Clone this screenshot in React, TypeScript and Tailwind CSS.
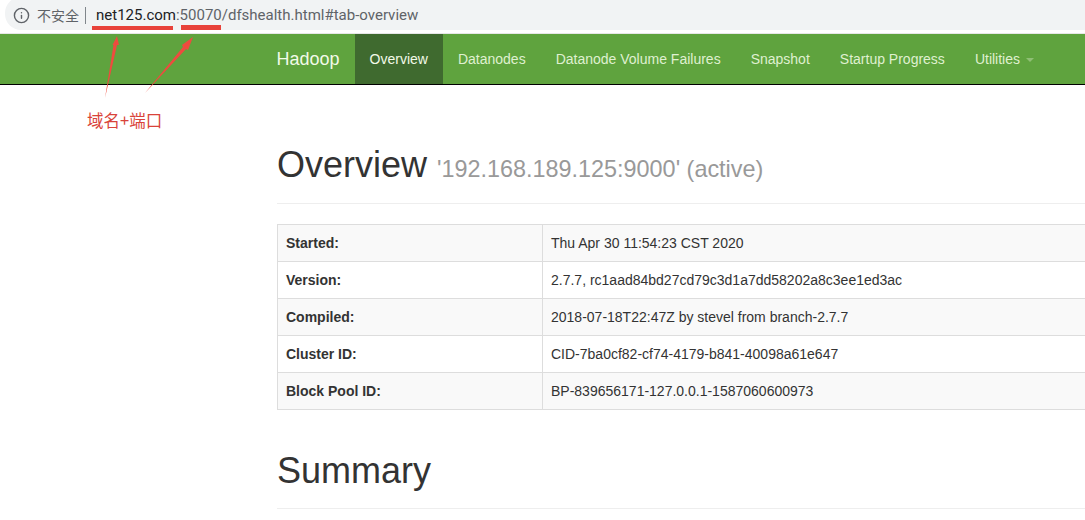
import { Info } from "lucide-react";

const rows = [
  ["Started:", "Thu Apr 30 11:54:23 CST 2020"],
  ["Version:", "2.7.7, rc1aad84bd27cd79c3d1a7dd58202a8c3ee1ed3ac"],
  ["Compiled:", "2018-07-18T22:47Z by stevel from branch-2.7.7"],
  ["Cluster ID:", "CID-7ba0cf82-cf74-4179-b841-40098a61e647"],
  ["Block Pool ID:", "BP-839656171-127.0.0.1-1587060600973"],
];

const links = ["Datanodes", "Datanode Volume Failures", "Snapshot", "Startup Progress"];

const AddressBar = () => (
  <div className="h-[33px] bg-white pl-[5px] overflow-hidden">
    <div className="h-[33px] -mt-[3px] pt-[3px] rounded-l-[16px] bg-[#f1f3f4] flex items-center pl-[8px] text-[#5f6368]">
      <Info size={17} strokeWidth={2} className="text-[#5f6368]" />
      <span className="ml-[7px] text-[14px] [font-family:'Noto_Sans_CJK_SC',sans-serif]">不安全</span>
      <span className="ml-[6px] h-[17px] w-px bg-[#80868b]" />
      <span className="ml-[10px] text-[15px] [font-family:Roboto,sans-serif]">
        <span className="text-[#202124]">net125.com</span>:50070/dfshealth.html#tab-overview
      </span>
    </div>
  </div>
);

const Navbar = () => (
  <nav className="h-[52px] bg-[#5fa33e] border-t border-t-[#e7e7e7] border-b border-b-black flex pl-[261.5px] text-[14px] text-[#dff0d0]">
    <a className="px-[15px] leading-[50px] text-[18px] text-[#f2fae8]">Hadoop</a>
    <a className="px-[15px] leading-[50px] bg-[#3f6a2f] text-[#f2fae8]">Overview</a>
    {links.map((l) => (
      <a key={l} className="px-[15px] leading-[50px]">{l}</a>
    ))}
    <a className="px-[15px] leading-[50px] flex items-center">
      Utilities
      <span className="ml-[6px] mt-[2px] w-0 h-0 border-x-[4px] border-x-transparent border-t-[4px] border-t-[#8fbf75]" />
    </a>
  </nav>
);

const Annotations = () => (
  <>
    <div className="absolute left-[92px] top-[26px] h-[4px] w-[81px] bg-[#e8423a]" />
    <div className="absolute left-[181px] top-[25px] h-[5px] w-[40px] bg-[#e8423a]" />
    <svg className="absolute left-0 top-0" width="260" height="110" viewBox="0 0 260 110">
      <path d="M105 98 L113.500 45 L112.500 45 L117 36 L119 45 L117 45 Z" fill="#ee4b3e" />
      <path d="M145 93 L183 47 L182 45 L193 37 L188 50 L186 49 Z" fill="#ee4b3e" />
    </svg>
    <span className="absolute left-[87px] top-[108px] text-[16.500px] leading-[24px] text-[#d9433a] [font-family:'Noto_Sans_CJK_SC',sans-serif]">
      域名+端口
    </span>
  </>
);

export default function App() {
  return (
    <div className="relative w-[1085px] h-[520px] overflow-hidden bg-white text-[#333] font-['Liberation_Sans',Arial,sans-serif]">
      <AddressBar />
      <Navbar />
      <Annotations />
      <main className="ml-[277px] w-[900px]">
        <div className="mt-[60px] pb-[14px] border-b border-[#eee]">
          <h1 className="text-[36px] leading-[40px]">
            Overview <small className="text-[23.4px] text-[#999]">'192.168.189.125:9000' (active)</small>
          </h1>
        </div>
        <table className="mt-[20px] w-[900px] border border-[#ddd] border-collapse text-[14px]">
          <tbody>
            {rows.map(([k, v], i) => (
              <tr key={k} className={i % 2 === 0 ? "bg-[#f9f9f9]" : "bg-white"}>
                <th className="w-[265px] h-[37px] border border-[#ddd] px-[8px] text-left font-bold">{k}</th>
                <td className="h-[37px] border border-[#ddd] px-[8px]">{v}</td>
              </tr>
            ))}
          </tbody>
        </table>
        <div className="mt-[41px] pb-[17px] border-b border-[#eee]">
          <h1 className="text-[36px] leading-[40px]">Summary</h1>
        </div>
      </main>
    </div>
  );
}
